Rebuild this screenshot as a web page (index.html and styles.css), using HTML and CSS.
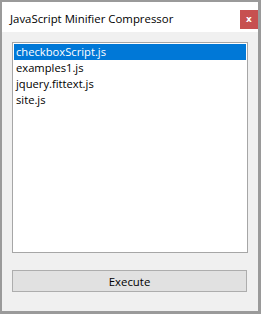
FILE: index.html
```html
<!DOCTYPE html>
<html lang="en">
<head>
    <meta charset="UTF-8">
    <meta name="viewport" content="width=device-width, initial-scale=1.0">
    <title>JavaScript Minifier Compressor</title>
    <link rel="stylesheet" href="styles.css">
</head>
<body>

    <div class="window">
        <div class="title-bar">
            <span class="title">JavaScript Minifier Compressor</span>
            <button class="close-btn">x</button>
        </div>
        <div class="content">
            <ul class="file-list">
                <li class="selected">checkboxScript.js</li>
                <li>examples1.js</li>
                <li>jquery.fittext.js</li>
                <li>site.js</li>
            </ul>
            <button class="execute-btn">Execute</button>
        </div>
    </div>

</body>
</html>
```

FILE: styles.css
```css
html, body {
    margin: 0;
    padding: 0;
}
body {
    font-family: "Open Sans", "Noto Sans", sans-serif;
    font-size: 11px;
    color: #000;
}
.window {
    width: 261px;
    height: 314px;
    box-sizing: border-box;
    border-style: solid;
    border-color: #9a9a9a;
    border-width: 2px 3px 3px 2px;
    display: flex;
    flex-direction: column;
    background: #f0f0f0;
}
.title-bar {
    height: 30px;
    background: #fff;
    display: flex;
    align-items: flex-start;
    justify-content: space-between;
}
.title {
    margin: 9px 0 0 8px;
    font-size: 11.4px;
    line-height: 16px;
    color: #000;
}
.close-btn {
    margin: 8px 0 0 0;
    width: 18px;
    height: 19px;
    padding: 0;
    border: none;
    background: #c75050;
    color: #fff;
    font-family: "DejaVu Sans", sans-serif;
    font-weight: bold;
    font-size: 9px;
    line-height: 17px;
}
.content {
    flex: 1;
    padding: 10px 11px 0 10px;
}
.file-list {
    list-style: none;
    margin: 0;
    padding: 1px;
    width: 236px;
    height: 211px;
    box-sizing: border-box;
    background: #fff;
    border: 1px solid #a6a6a6;
}
.file-list li {
    height: 16px;
    line-height: 16px;
    padding-left: 2px;
    font-size: 11.2px;
    white-space: nowrap;
}
.file-list li.selected {
    background: #0078d7;
    color: #fff;
}
.execute-btn {
    display: block;
    margin-top: 17px;
    width: 235px;
    height: 22px;
    padding: 0;
    background: #e1e1e1;
    border: 1px solid #adadad;
    font-family: "Open Sans", "Noto Sans", sans-serif;
    font-size: 11.4px;
    color: #000;
}
```
